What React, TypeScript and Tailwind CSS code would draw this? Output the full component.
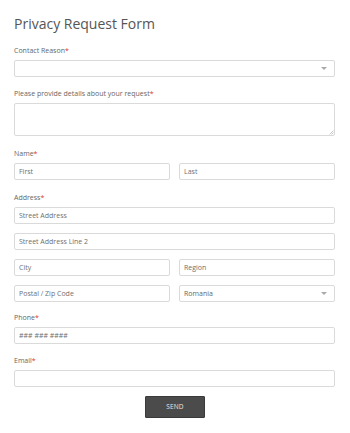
import { FormEvent } from "react";

const font = { fontFamily: '"Open Sans", "Liberation Sans", sans-serif' };

const inputCls =
  "block w-full h-[17px] border border-[#dadada] rounded-[2px] bg-white px-[4px] text-[7px] text-[#666] placeholder:text-[#6f6f6f] outline-none";

function Label({ text }: { text: string }) {
  return (
    <label className="block text-[7px] leading-[10px] text-[#666] mb-[4px]">
      {text}
      <span className="text-[#e0352b]">*</span>
    </label>
  );
}

function Arrow() {
  return (
    <span className="pointer-events-none absolute right-[8px] top-[7px] w-0 h-0 border-l-[3px] border-r-[3px] border-t-[3px] border-l-transparent border-r-transparent border-t-[#aaa]" />
  );
}

function Select({ value }: { value?: string }) {
  return (
    <div className="relative">
      <div className={inputCls + " leading-[15px]"}>{value}</div>
      <Arrow />
    </div>
  );
}

export default function App() {
  function handleSubmit(e: FormEvent) {
    e.preventDefault();
  }

  return (
    <div className="w-[350px] h-[433px] bg-white overflow-hidden" style={font}>
      <form onSubmit={handleSubmit} className="pl-[14px] pr-[15px] pt-[14px]">
        <h1 className="text-[14px] leading-[20px] text-[#555] font-normal">Privacy Request Form</h1>

        <div className="mt-[12px]">
          <Label text="Contact Reason" />
          <Select />
        </div>

        <div className="mt-[12px]">
          <Label text="Please provide details about your request" />
          <div className="relative">
            <textarea className="block w-full h-[33px] border border-[#dadada] rounded-[2px] bg-white outline-none resize-none" />
            <svg className="absolute right-[1px] bottom-[1px]" width="5" height="5" viewBox="0 0 5 5">
              <path d="M4.5 0.5 L0.5 4.5 M4.5 2.5 L2.5 4.5" stroke="#bbb" strokeWidth="0.8" />
            </svg>
          </div>
        </div>

        <div className="mt-[13px]">
          <Label text="Name" />
          <div className="grid grid-cols-2 gap-[9px]">
            <input className={inputCls} placeholder="First" />
            <input className={inputCls} placeholder="Last" />
          </div>
        </div>

        <div className="mt-[13px]">
          <Label text="Address" />
          <div className="flex flex-col gap-[9px]">
            <input className={inputCls} placeholder="Street Address" />
            <input className={inputCls} placeholder="Street Address Line 2" />
            <div className="grid grid-cols-2 gap-[9px]">
              <input className={inputCls} placeholder="City" />
              <input className={inputCls} placeholder="Region" />
            </div>
            <div className="grid grid-cols-2 gap-[9px]">
              <input className={inputCls} placeholder="Postal / Zip Code" />
              <Select value="Romania" />
            </div>
          </div>
        </div>

        <div className="mt-[11px]">
          <Label text="Phone" />
          <input className={inputCls} placeholder="### ### ####" />
        </div>

        <div className="mt-[12px]">
          <Label text="Email" />
          <input className={inputCls} />
        </div>

        <div className="flex justify-center mt-[9px] pl-[1px]">
          <button
            type="submit"
            className="w-[60px] h-[22px] bg-[#4b4b4b] border border-[#3a3a3a] rounded-[1px] text-[6.5px] text-[#e5e5e5] tracking-[0.2px]"
          >
            SEND
          </button>
        </div>
      </form>
    </div>
  );
}
